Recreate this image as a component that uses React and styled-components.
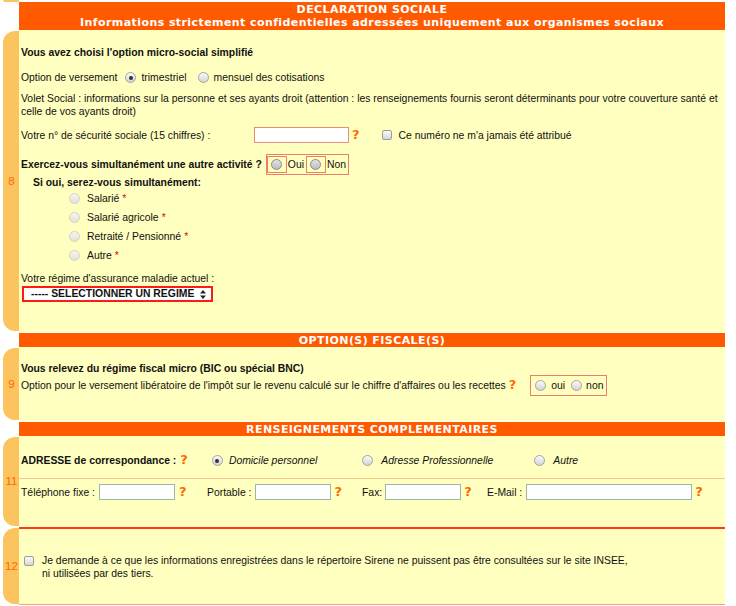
import React from "react";
import styled, { createGlobalStyle } from "styled-components";

const Global = createGlobalStyle`
  html, body { margin: 0; padding: 0; background: #ffffff; }
  body { font-family: "Liberation Sans", Arial, sans-serif; font-size: 10.4px; line-height: 13px; color: #111; }
  * { box-sizing: border-box; }
`;

const Page = styled.div`
  width: 725px;
  display: flex;
  flex-direction: column;
`;

const TopStub = styled.div`
  height: 2px;
  width: 16px;
  margin-left: 3px;
  background: #fcc45e;
  border-radius: 0 0 0 6px;
`;

const HeaderRow = styled.div`
  padding-left: 19px;
  margin-top: ${(p) => p.$mt || 0}px;
`;

const HeaderBar = styled.div`
  background: #ff5a00;
  color: #ffffff;
  font-family: "DejaVu Sans", Verdana, sans-serif;
  font-weight: bold;
  font-size: 11px;
  line-height: 13px;
  letter-spacing: 0.42px;
  text-align: center;
  padding: ${(p) => (p.$double ? "1px 0" : "0.5px 0")};
`;

const BodyRow = styled.div`
  display: grid;
  grid-template-columns: 19px 1fr;
`;

const Tab = styled.div`
  margin: 1px 0 1px 3px;
  background: #fcc45e;
  border-radius: 12px 0 0 12px;
  display: flex;
  align-items: center;
  justify-content: center;
  color: #ff6a00;
  font-size: 11.5px;
  padding-left: 1px;
`;

const Body = styled.div`
  background: #ffffc0;
  padding: ${(p) => p.$pad};
  border-top: ${(p) => (p.$redTop ? "2px solid #ff3a1a" : "none")};
  border-bottom: ${(p) => (p.$lineBottom ? "1px solid #f3a277" : "none")};
  display: flex;
  flex-direction: column;
`;

const Line = styled.div`
  line-height: 13px;
  margin-top: ${(p) => p.$mt || 0}px;
  padding-left: ${(p) => p.$indent || 0}px;
  font-weight: ${(p) => (p.$bold ? "bold" : "normal")};
`;

const Para = styled.p`
  margin: ${(p) => p.$mt || 0}px 0 0 0;
  line-height: 13px;
  padding-right: 6px;
`;

const Row = styled.div`
  display: flex;
  align-items: center;
  line-height: 13px;
  min-height: ${(p) => p.$h || 13}px;
  margin-top: ${(p) => p.$mt || 0}px;
  padding-left: ${(p) => p.$pl || 0}px;
`;

const Bold = styled.span`
  font-weight: bold;
`;

const LabelCell = styled.span`
  width: ${(p) => p.$w}px;
  flex: none;
  font-weight: ${(p) => (p.$bold ? "bold" : "normal")};
`;

const Radio = styled.span`
  position: relative;
  display: inline-block;
  flex: none;
  width: 11px;
  height: 11px;
  border-radius: 50%;
  border: 1px solid ${(p) => (p.$disabled ? "#d2d2c4" : p.$tone === "dark" ? "#8a8a8a" : "#a4a4a4")};
  background: ${(p) =>
    p.$disabled
      ? "linear-gradient(#f6f6ee, #e2e2d8)"
      : p.$tone === "dark"
      ? "linear-gradient(#e2e2e2, #bdbdbd)"
      : "linear-gradient(#fbfbfb, #d4d4d4)"};
  &::after {
    content: "";
    display: ${(p) => (p.$checked ? "block" : "none")};
    position: absolute;
    left: 50%;
    top: 50%;
    width: 4px;
    height: 4px;
    margin: -2px 0 0 -2px;
    border-radius: 50%;
    background: #333;
  }
`;

const Check = styled.span`
  display: inline-block;
  flex: none;
  width: 10px;
  height: 10px;
  border-radius: 2px;
  border: 1px solid #9c9c9c;
  background: linear-gradient(#fafafa, #d6d6d6);
  margin-top: ${(p) => p.$mt || 0}px;
`;

const Opt = styled.span`
  display: inline-flex;
  align-items: center;
  gap: ${(p) => p.$gap || 5}px;
  margin-left: ${(p) => p.$ml || 0}px;
  font-style: ${(p) => (p.$italic ? "italic" : "normal")};
  line-height: 13px;
`;

const Help = styled.span`
  color: #ff6a00;
  font-family: "DejaVu Sans", Verdana, sans-serif;
  font-weight: bold;
  font-size: 13px;
  line-height: 13px;
  margin-left: ${(p) => p.$ml || 3}px;
  position: relative;
  top: -1px;
`;

const Star = styled.span`
  color: #e60000;
  margin-left: 3px;
`;

const TextInput = styled.span`
  display: inline-block;
  flex: none;
  width: ${(p) => p.$w}px;
  height: 16px;
  background: #ffffff;
  border: 1px solid ${(p) => (p.$alert ? "#f08a7c" : "#9cb8a8")};
  margin-left: ${(p) => p.$ml || 0}px;
`;

const ChoiceBox = styled.span`
  display: inline-flex;
  align-items: center;
  border: 1px solid #f07c6c;
  padding: ${(p) => p.$pad || "1px"};
  margin-left: ${(p) => p.$ml || 0}px;
  gap: ${(p) => p.$gap || 0}px;
  height: 21px;
`;

const RadioCell = styled.span`
  display: inline-flex;
  align-items: center;
  justify-content: center;
  border: 1px solid #f07c6c;
  height: 17px;
  width: 20px;
`;

const CellText = styled.span`
  padding: 0 2px 0 1px;
`;

const SubList = styled.div`
  display: flex;
  flex-direction: column;
  gap: 6px;
  margin-top: 3px;
  padding-left: 48px;
`;

const SelectFrame = styled.div`
  width: 191px;
  height: 16px;
  margin: 1px 0 0 1px;
  border: 2px solid #ff1a1a;
  display: flex;
`;

const SelectField = styled.div`
  flex: 1;
  background: #ffffff;
  border-radius: 3px;
  display: flex;
  align-items: center;
  justify-content: space-between;
  padding: 0 5px 0 7px;
  font-weight: bold;
  font-size: 10.4px;
  line-height: 12px;
`;

const Divider = styled.div`
  height: 1px;
  background: #f6c88e;
  margin: ${(p) => p.$m};
`;

const FieldGrid = styled.div`
  display: grid;
  grid-template-columns: 186px 155px 125px 1fr;
  align-items: center;
  height: 16px;
  padding-left: 2px;
`;

const Field = styled.span`
  display: flex;
  align-items: center;
`;

const NoticeRow = styled.div`
  display: flex;
  align-items: flex-start;
  gap: 8px;
  padding-left: 3px;
`;

const NoticeText = styled.div`
  line-height: 13px;
`;

const Arrows = () => (
  <svg width="6" height="9" viewBox="0 0 6 9">
    <path d="M3 0 L6 3.5 L0 3.5 Z" fill="#222" />
    <path d="M3 9 L6 5.5 L0 5.5 Z" fill="#222" />
  </svg>
);

export default function App() {
  return (
    <>
      <Global />
      <Page>
        <TopStub />
        <HeaderRow>
          <HeaderBar $double>
            DECLARATION SOCIALE
            <br />
            Informations strictement confidentielles adressées uniquement aux organismes sociaux
          </HeaderBar>
        </HeaderRow>

        <BodyRow>
          <Tab>8</Tab>
          <Body $pad="16px 0 30px 2px">
            <Line $bold>Vous avez choisi l'option micro-social simplifié</Line>
            <Row $mt={12}>
              Option de versement
              <Opt $ml={8}>
                <Radio $checked />
                trimestriel
              </Opt>
              <Opt $ml={11}>
                <Radio />
                mensuel des cotisations
              </Opt>
            </Row>
            <Para $mt={8}>
              Volet Social : informations sur la personne et ses ayants droit (attention : les renseignements fournis seront
              déterminants pour votre couverture santé et celle de vos ayants droit)
            </Para>
            <Row $mt={9} $h={16}>
              <LabelCell $w={233}>Votre n° de sécurité sociale (15 chiffres) :</LabelCell>
              <TextInput $w={95} $alert />
              <Help $ml={3}>?</Help>
              <Opt $ml={22} $gap={7}>
                <Check />
                Ce numéro ne m'a jamais été attribué
              </Opt>
            </Row>
            <Row $mt={11} $h={21}>
              <Bold>Exercez-vous simultanément une autre activité ?</Bold>
              <ChoiceBox $ml={4} $pad="0">
                <RadioCell>
                  <Radio $tone="dark" />
                </RadioCell>
                <CellText>Oui</CellText>
                <RadioCell>
                  <Radio $tone="dark" />
                </RadioCell>
                <CellText>Non</CellText>
              </ChoiceBox>
            </Row>
            <Line $bold $indent={12} $mt={1}>
              Si oui, serez-vous simultanément:
            </Line>
            <SubList>
              <Opt $gap={7}>
                <Radio $disabled />
                <span>
                  Salarié<Star>*</Star>
                </span>
              </Opt>
              <Opt $gap={7}>
                <Radio $disabled />
                <span>
                  Salarié agricole<Star>*</Star>
                </span>
              </Opt>
              <Opt $gap={7}>
                <Radio $disabled />
                <span>
                  Retraité / Pensionné<Star>*</Star>
                </span>
              </Opt>
              <Opt $gap={7}>
                <Radio $disabled />
                <span>
                  Autre<Star>*</Star>
                </span>
              </Opt>
            </SubList>
            <Line $mt={10}>Votre régime d'assurance maladie actuel :</Line>
            <SelectFrame>
              <SelectField>
                <span>----- SELECTIONNER UN REGIME</span>
                <Arrows />
              </SelectField>
            </SelectFrame>
          </Body>
        </BodyRow>

        <HeaderRow $mt={1}>
          <HeaderBar>OPTION(S) FISCALE(S)</HeaderBar>
        </HeaderRow>

        <BodyRow>
          <Tab>9</Tab>
          <Body $pad="15px 0 25px 2px">
            <Line $bold>Vous relevez du régime fiscal micro (BIC ou spécial BNC)</Line>
            <Row $h={21}>
              Option pour le versement libératoire de l'impôt sur le revenu calculé sur le chiffre d'affaires ou les recettes
              <Help $ml={3}>?</Help>
              <ChoiceBox $ml={14} $pad="0 3px 0 4px" $gap={0}>
                <Opt $gap={5}>
                  <Radio />
                  oui
                </Opt>
                <Opt $gap={4} $ml={6}>
                  <Radio />
                  non
                </Opt>
              </ChoiceBox>
            </Row>
          </Body>
        </BodyRow>

        <HeaderRow $mt={1}>
          <HeaderBar>RENSEIGNEMENTS COMPLEMENTAIRES</HeaderBar>
        </HeaderRow>

        <BodyRow>
          <Tab>11</Tab>
          <Body $pad="18px 0 27px 0">
            <Row $pl={2}>
              <Bold>ADRESSE de correspondance :</Bold>
              <Help $ml={4}>?</Help>
              <Opt $italic $ml={24} $gap={6}>
                <Radio $checked />
                Domicile personnel
              </Opt>
              <Opt $italic $ml={45} $gap={8}>
                <Radio />
                Adresse Professionnelle
              </Opt>
              <Opt $italic $ml={41} $gap={8}>
                <Radio />
                Autre
              </Opt>
            </Row>
            <Divider $m="11px 0 5px 0" />
            <FieldGrid>
              <Field>
                Téléphone fixe :
                <TextInput $w={76} $ml={4} />
                <Help $ml={4}>?</Help>
              </Field>
              <Field>
                Portable :
                <TextInput $w={76} $ml={4} />
                <Help $ml={3}>?</Help>
              </Field>
              <Field>
                Fax:
                <TextInput $w={76} $ml={3} />
                <Help $ml={3}>?</Help>
              </Field>
              <Field>
                E-Mail :
                <TextInput $w={166} $ml={4} />
                <Help $ml={3}>?</Help>
              </Field>
            </FieldGrid>
          </Body>
        </BodyRow>

        <BodyRow>
          <Tab>12</Tab>
          <Body $pad="25px 0 24px 2px" $redTop $lineBottom>
            <NoticeRow>
              <Check $mt={2} />
              <NoticeText>
                Je demande à ce que les informations enregistrées dans le répertoire Sirene ne puissent pas être consultées sur le
                site INSEE,
                <br />
                ni utilisées par des tiers.
              </NoticeText>
            </NoticeRow>
          </Body>
        </BodyRow>
      </Page>
    </>
  );
}
